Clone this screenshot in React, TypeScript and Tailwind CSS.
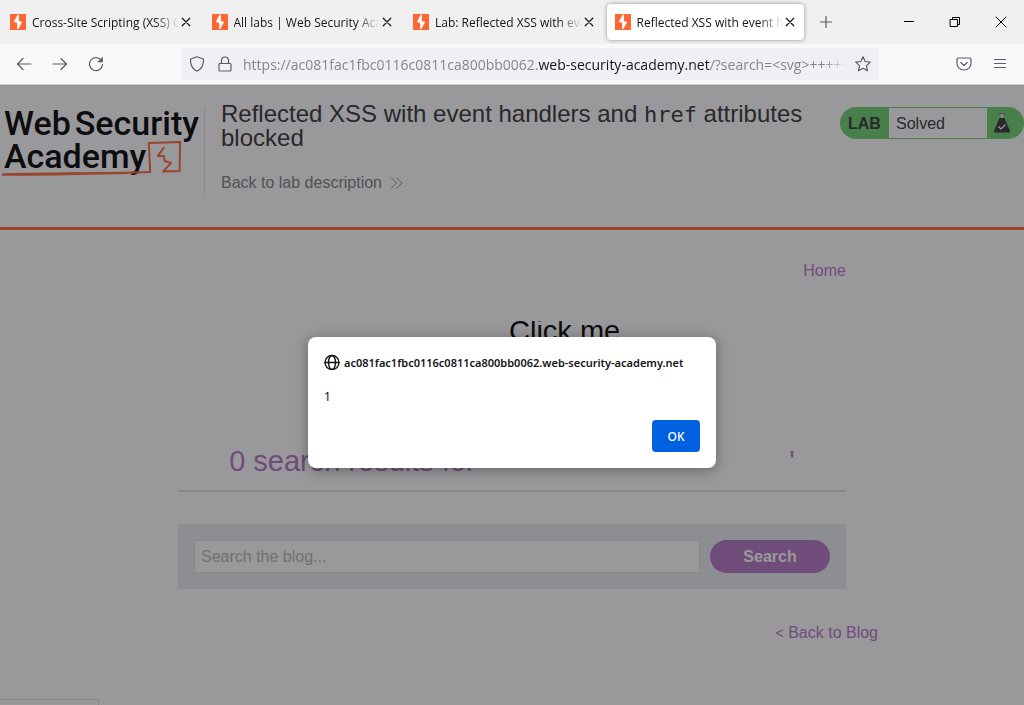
import type { ReactNode } from "react";

const tabs = [
  { title: "Cross-Site Scripting (XSS) Cheat Sheet", active: false },
  { title: "All labs | Web Security Academy", active: false },
  { title: "Lab: Reflected XSS with event handlers", active: false },
  { title: "Reflected XSS with event handlers", active: true },
];

const host = "ac081fac1fbc0116c0811ca800bb0062";

function Favicon() {
  return (
    <svg viewBox="0 0 16 16" className="size-4 shrink-0" aria-hidden="true">
      <rect width="16" height="16" fill="#ff6633" />
      <path
        d="M7.600 0.800H9L8.800 5.800 9.200 7.200 12.200 7.800 8.400 15H7L7.300 10.200 6.800 8.700 3.800 8.100Z"
        fill="#fff"
      />
    </svg>
  );
}

function Stroke({ children, className = "size-4" }: { children: ReactNode; className?: string }) {
  return (
    <svg
      viewBox="0 0 16 16"
      className={`shrink-0 ${className}`}
      fill="none"
      stroke="currentColor"
      strokeWidth="1.2"
      strokeLinecap="round"
      strokeLinejoin="round"
      aria-hidden="true"
    >
      {children}
    </svg>
  );
}

function TabStrip() {
  return (
    <div className="flex h-11 items-center bg-[#f0f0f0] text-xs text-[#15141a]">
      <div className="flex h-full min-w-0 basis-[806px] items-center">
        {tabs.map((tab) => (
          <div key={tab.title} className="h-full min-w-0 flex-1 px-0.5 py-1">
            <div
              className={
                tab.active
                  ? "flex h-full items-center rounded bg-white px-2 shadow-[0_0_4px_rgba(0,0,0,0.4)]"
                  : "flex h-full items-center px-2"
              }
            >
              <Favicon />
              <span className="mt-0.5 ml-1.5 min-w-0 flex-1 overflow-hidden whitespace-nowrap [mask-image:linear-gradient(to_left,transparent,black_24px)]">
                {tab.title}
              </span>
              <button type="button" aria-label="Close tab" className="ml-px flex">
                <Stroke className="size-3">
                  <path d="M3 3l10 10M13 3 3 13" strokeWidth="1.6" />
                </Stroke>
              </button>
            </div>
          </div>
        ))}
      </div>
      <button type="button" aria-label="New tab" className="ml-3 flex text-[#5b5b66]">
        <Stroke>
          <path d="M8 2.5v11M2.5 8h11" />
        </Stroke>
      </button>
      <div className="ml-auto flex gap-[30px] pr-[15px] text-black">
        <button type="button" aria-label="Minimize" className="flex">
          <Stroke>
            <path d="M3 7.5h10" strokeWidth="1" strokeLinecap="butt" />
          </Stroke>
        </button>
        <button type="button" aria-label="Restore" className="flex">
          <Stroke>
            <path d="M3.500 5.500h7v7h-7zM5.500 5.500v-2h7v7h-2" strokeWidth="1" strokeLinejoin="miter" />
          </Stroke>
        </button>
        <button type="button" aria-label="Close window" className="flex">
          <Stroke>
            <path d="M3 3l10 10M13 3 3 13" strokeWidth="1" />
          </Stroke>
        </button>
      </div>
    </div>
  );
}

function Toolbar() {
  return (
    <div className="flex h-[41px] items-center border-b border-[#cccccc] bg-[#f9f9fb] text-[#5b5b66]">
      <div className="flex w-[181px] shrink-0 gap-5 pl-4">
        <button type="button" aria-label="Back" className="flex">
          <Stroke>
            <path d="M15 8H1.5M7 2.5 1.5 8 7 13.5" />
          </Stroke>
        </button>
        <button type="button" aria-label="Forward" className="flex">
          <Stroke>
            <path d="M1 8h13.5M9 2.5 14.500 8 9 13.5" />
          </Stroke>
        </button>
        <button type="button" aria-label="Reload" className="flex">
          <Stroke>
            <path d="M13.200 4.200A6.500 6.500 0 1 0 14.500 8.500" />
            <path d="M14.500 1.500v4.500H10z" fill="currentColor" strokeWidth="0.600" />
          </Stroke>
        </button>
      </div>
      <div className="flex h-8 min-w-0 flex-1 items-center rounded bg-[#f0f0f4] px-2">
        <Stroke>
          <path d="M8 .8 1.500 3c-.3 5 1 9.500 6.500 12.200C13.500 12.500 14.800 8 14.500 3Z" />
        </Stroke>
        <Stroke className="ml-3 size-4">
          <path d="M3 7.500h10a1 1 0 0 1 1 1V14a1 1 0 0 1-1 1H3a1 1 0 0 1-1-1V8.500a1 1 0 0 1 1-1ZM4.500 7.300V4.500a3.500 3.500 0 0 1 7 0v2.800" />
        </Stroke>
        <p className="mt-0.5 ml-2.5 min-w-0 flex-1 overflow-hidden text-sm whitespace-nowrap text-[#85858d] [mask-image:linear-gradient(to_left,transparent,black_24px)]">
          https://{host}.<span className="text-[#15141a]">web-security-academy.net</span>
          /?search=&lt;svg&gt;+++++&lt;a&gt;
        </p>
        <button type="button" aria-label="Bookmark this page" className="ml-2 flex">
          <Stroke>
            <path d="m8 .8 2.200 4.700 5.100.6-3.800 3.500 1 5.200L8 12.300l-4.500 2.500 1-5.200L.7 6.100l5.100-.6Z" />
          </Stroke>
        </button>
      </div>
      <div className="flex w-[145px] shrink-0 justify-end gap-5 pr-4">
        <button type="button" aria-label="Save to Pocket" className="flex">
          <Stroke>
            <path d="M2.500 2h11A1.500 1.500 0 0 1 15 3.500V7.500a7 6.500 0 0 1-14 0V3.500A1.500 1.500 0 0 1 2.500 2ZM4.800 6.500 8 9.500l3.200-3" />
          </Stroke>
        </button>
        <button type="button" aria-label="Open application menu" className="flex">
          <Stroke>
            <path d="M2.500 3.500h11M2.500 7.500h11M2.500 11.500h11" />
          </Stroke>
        </button>
      </div>
    </div>
  );
}

function AcademyLogo() {
  return (
    <a
      href="#academy"
      className="relative block h-[87px] w-[205px] shrink-0 border-r border-[#e2e2e8] pl-1 font-['Roboto','Liberation_Sans',sans-serif] text-[34px] leading-[33px] font-medium text-black"
    >
      <span className="flex gap-1">
        <span>Web</span>
        <span>Security</span>
      </span>
      <span className="block">Academy</span>
      <svg
        viewBox="0 0 205 87"
        className="absolute inset-0 h-full w-full"
        fill="none"
        stroke="#ff6633"
        strokeWidth="2"
        strokeLinejoin="round"
        aria-hidden="true"
      >
        <path d="M2 67.500C45 65.500 95 67 151 65L149.500 36 181 35 180.500 64 164 64.500 172 56 165.500 54 164.500 49 158.500 49 165 40" />
        <path d="M3 67.500C40 68.500 70 67.500 128 66" />
      </svg>
    </a>
  );
}

function LabStatus() {
  return (
    <div className="flex h-8 w-[184px] shrink-0 items-center rounded-full bg-[#6cd26c] py-px text-[#333332]">
      <span className="w-[49px] pt-0.5 pl-2 font-bold">LAB</span>
      <span className="flex h-full flex-1 items-center bg-white pt-0.5 pl-[7px]">Solved</span>
      <span className="flex w-[37px] pl-1.5">
        <svg viewBox="0 0 18 22" className="h-[22px] w-[18px]" aria-hidden="true">
          <path d="M5.500 1.500h7M7.500 1.500v5M10.500 1.500v5" stroke="#777" strokeWidth="1" fill="none" />
          <rect x="7.500" y="2" width="3" height="4.500" fill="#e8e8e8" />
          <path d="M6.500 6h5l5.300 12.500c.4 1.200 0 2-1.200 2H2.400c-1.200 0-1.600-.8-1.200-2Z" fill="#333332" />
          <path d="m5.500 14.500 2.500 2.500 4.500-4.500" stroke="#fff" strokeWidth="1.200" fill="none" />
        </svg>
      </span>
    </div>
  );
}

function LabHeader() {
  return (
    <header className="flex h-[145px] items-start border-b-[3px] border-[#ff6633] pt-[22px]">
      <AcademyLogo />
      <div className="-mt-[5px] min-w-0 flex-1 pl-4">
        <h2 className="max-w-[600px] text-2xl leading-6 text-[#333332]">
          Reflected XSS with event handlers and{" "}
          <code className="font-['DejaVu_Sans_Mono',monospace] text-[22px] leading-none">href</code>{" "}
          attributes blocked
        </h2>
        <a href="#description" className="mt-[21px] flex items-center gap-2 text-[#808080]">
          Back to lab description
          <svg
            viewBox="0 0 13 12"
            className="h-3 w-[13px]"
            fill="none"
            stroke="#909090"
            aria-hidden="true"
          >
            <path d="m1 .5 5.500 5.500L1 11.500M6.500.5 12 6l-5.500 5.500" />
          </svg>
        </a>
      </div>
      <LabStatus />
    </header>
  );
}

function BlogSearch() {
  return (
    <main className="mx-[178px] pt-[29px]">
      <nav className="flex justify-end">
        <a href="#home" className="text-[#b376c4]">
          Home
        </a>
      </nav>
      <section className="mt-[38px] border-b-2 border-[#e2e4e6] pb-[13px]">
        <h1 className="flex items-baseline justify-center text-[29px] leading-8 whitespace-nowrap text-[#b376c4]">
          <span>0 search results for '</span>
          <svg width="300" height="150" className="inline-block shrink-0">
            <a href="#click">
              <text x="20" y="20" fill="#000">
                Click me
              </text>
            </a>
          </svg>
          <span>'</span>
        </h1>
      </section>
      <form
        className="mt-8 flex gap-2.5 bg-[#e9edee] p-4"
        onSubmit={(event) => event.preventDefault()}
      >
        <input
          type="text"
          aria-label="Search the blog"
          placeholder="Search the blog..."
          className="h-[33px] min-w-0 flex-1 border border-[#dfe3e6] bg-white px-1.5 placeholder:text-[#b8b8b8]"
        />
        <button type="submit" className="h-[33px] w-[120px] rounded-full bg-[#b376c4] font-bold text-white">
          Search
        </button>
      </form>
      <div className="-mr-8 mt-8 flex justify-end">
        <a href="#blog" className="text-[#b376c4]">
          <span className="text-sm">&lt;</span> Back to Blog
        </a>
      </div>
    </main>
  );
}

function AlertDialog() {
  return (
    <div className="absolute inset-0 flex items-start justify-center bg-[rgba(28,27,34,0.45)] pt-[252px]">
      <div
        role="alertdialog"
        aria-labelledby="alert-host"
        aria-describedby="alert-message"
        className="w-[408px] rounded-lg bg-white p-4 font-['Noto_Sans','Open_Sans',sans-serif] text-xs leading-4 text-[#15141a] shadow-[0_2px_14px_rgba(0,0,0,0.35)]"
      >
        <div className="flex items-center gap-1 text-[11px] font-semibold whitespace-nowrap">
          <Stroke>
            <g strokeWidth="1.400">
              <circle cx="8" cy="8.500" r="7" />
              <ellipse cx="8" cy="8.500" rx="3.500" ry="7" />
              <path d="M1 8.500h14" />
            </g>
          </Stroke>
          <span id="alert-host" className="pt-0.5">
            {host}.web-security-academy.net
          </span>
        </div>
        <p id="alert-message" className="mt-[18px]">
          1
        </p>
        <div className="mt-[15px] flex justify-end">
          <button type="button" className="h-8 w-12 rounded bg-[#0061e0] pt-0.5 font-medium text-white">
            OK
          </button>
        </div>
      </div>
    </div>
  );
}

export default function App() {
  return (
    <div className="flex h-screen flex-col overflow-hidden bg-white">
      <div className="shrink-0 font-['Open_Sans','Noto_Sans',sans-serif]">
        <TabStrip />
        <Toolbar />
      </div>
      <div className="relative min-h-0 flex-1 overflow-hidden font-['Liberation_Sans',Arial,sans-serif] text-base">
        <LabHeader />
        <BlogSearch />
        <div className="mt-[54px] h-6 w-[99px] border border-l-0 border-[#dcdce0]" />
        <AlertDialog />
      </div>
    </div>
  );
}
